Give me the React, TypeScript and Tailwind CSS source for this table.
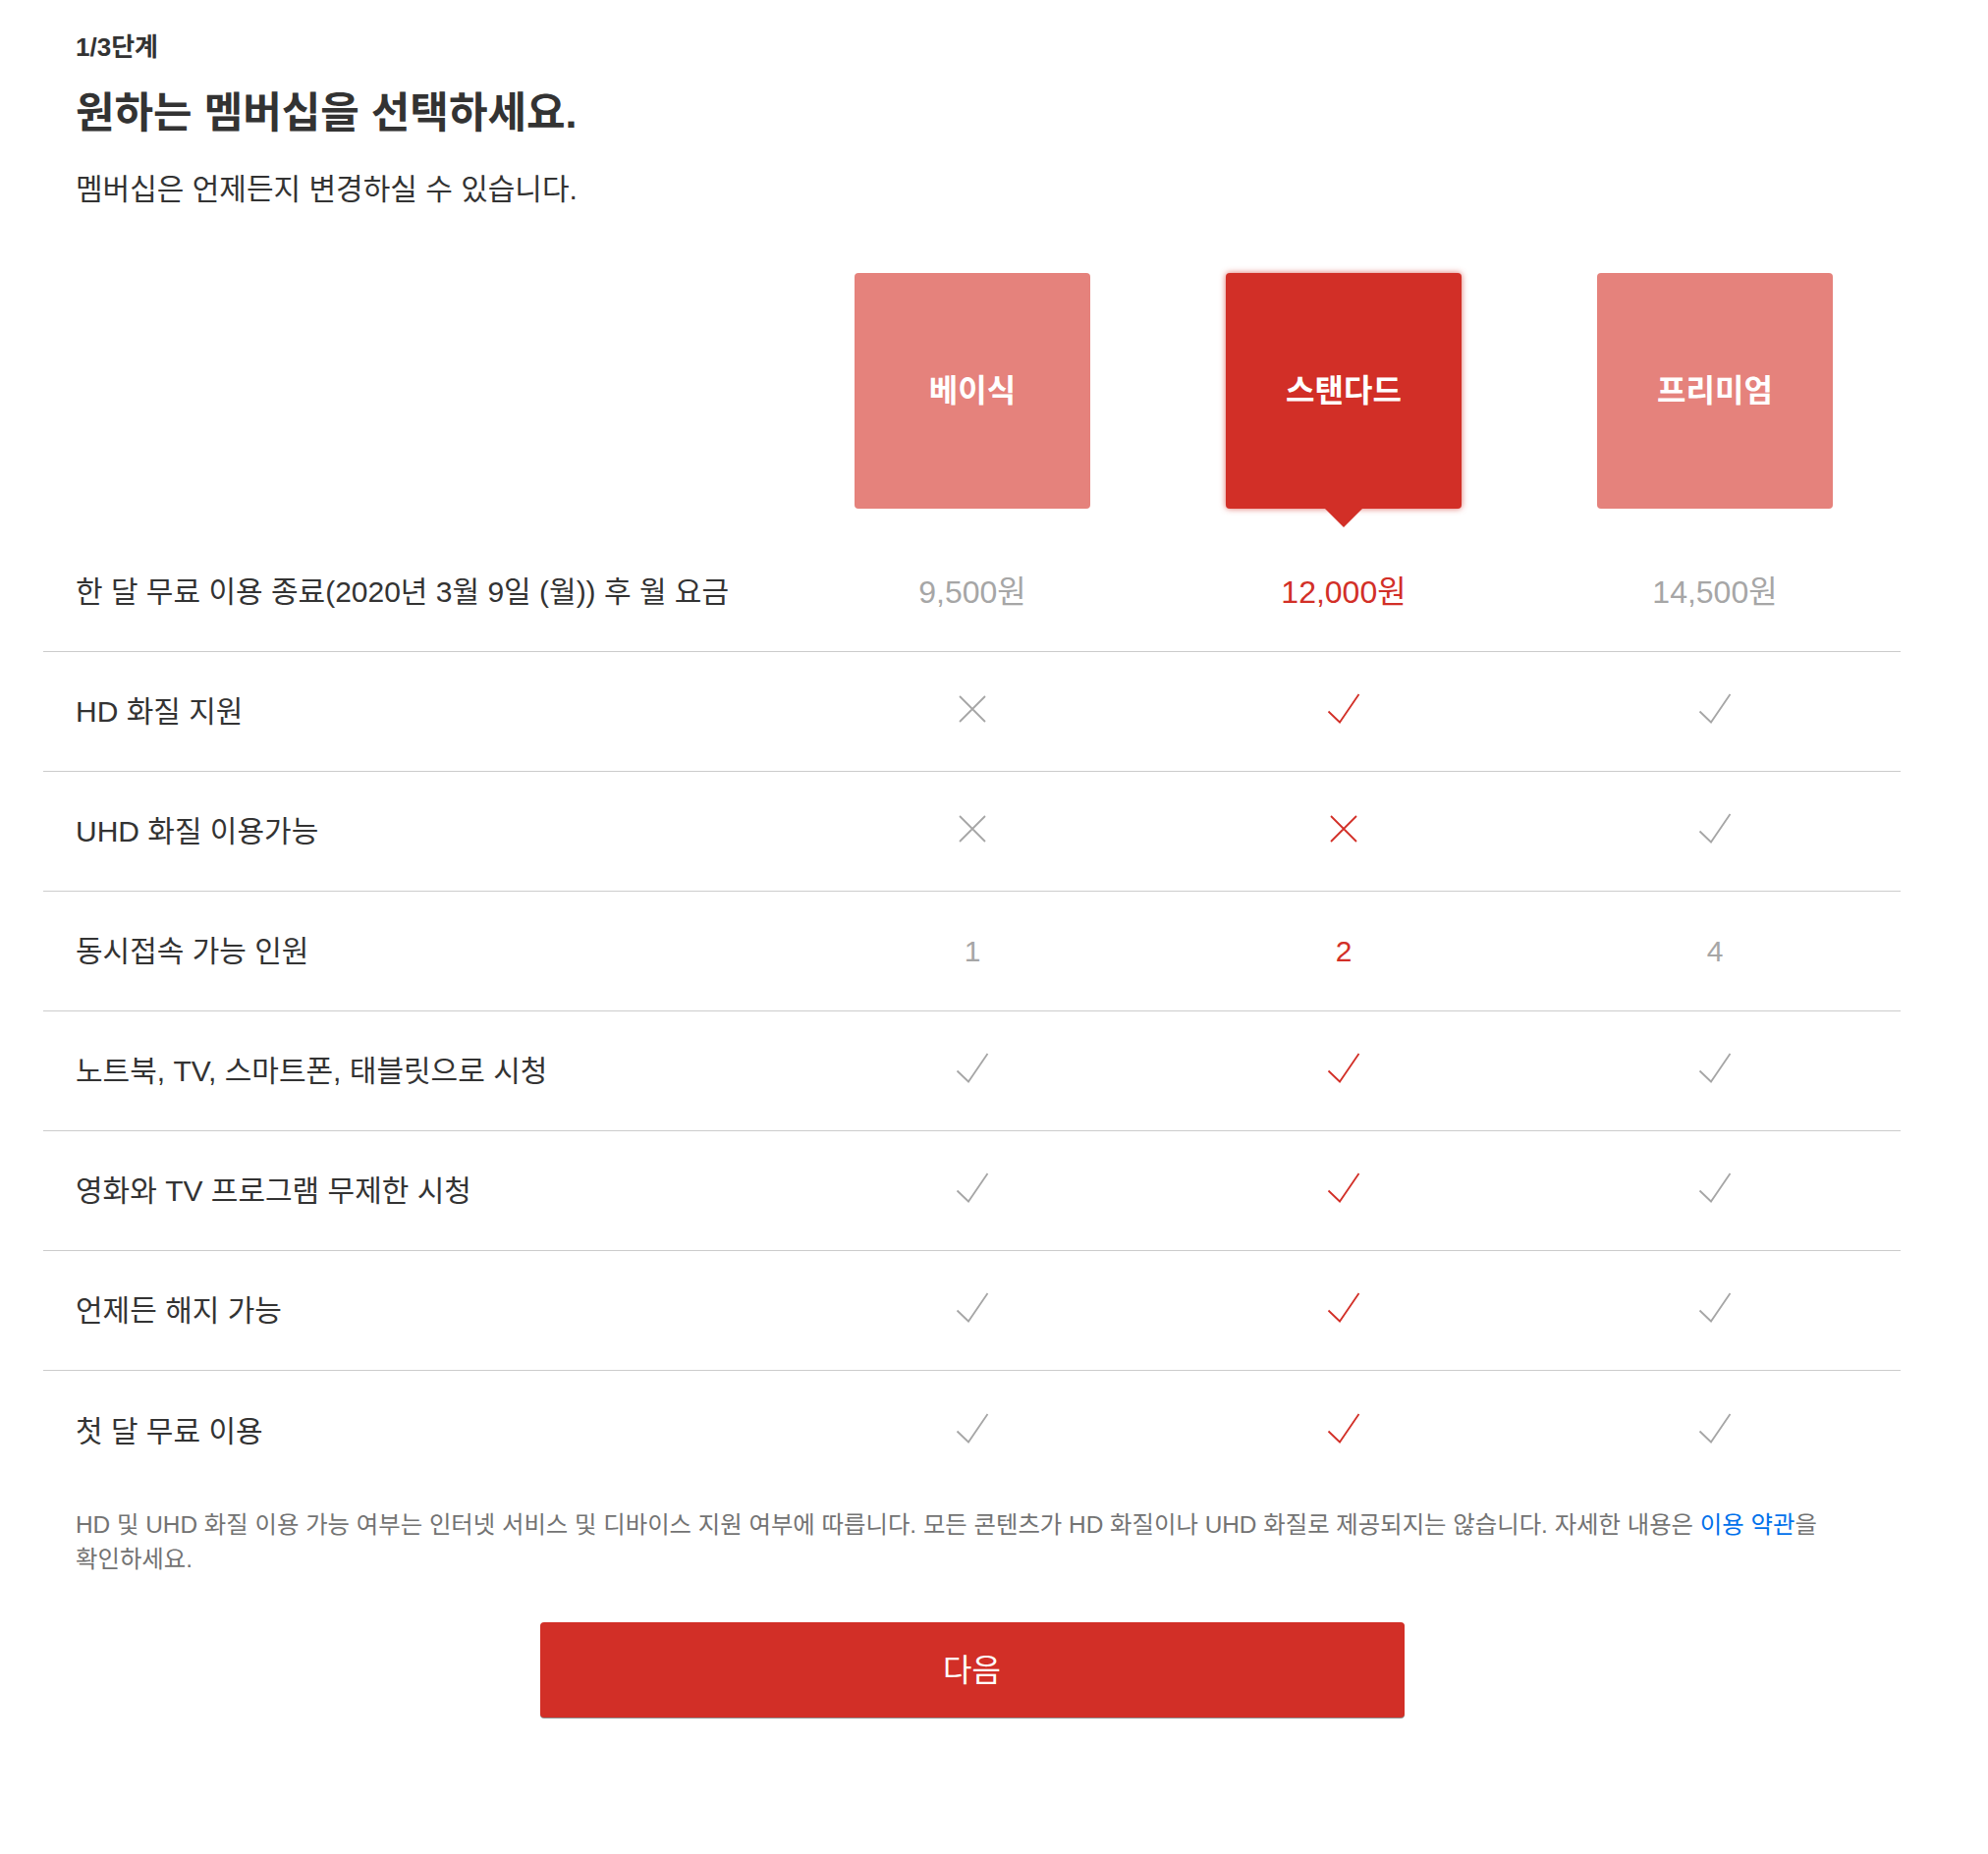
import React from 'react'

type Value = 'check' | 'x' | string

const features: { label: string; values: Value[] }[] = [
  { label: 'HD 화질 지원', values: ['x', 'check', 'check'] },
  { label: 'UHD 화질 이용가능', values: ['x', 'x', 'check'] },
  { label: '동시접속 가능 인원', values: ['1', '2', '4'] },
  { label: '노트북, TV, 스마트폰, 태블릿으로 시청', values: ['check', 'check', 'check'] },
  { label: '영화와 TV 프로그램 무제한 시청', values: ['check', 'check', 'check'] },
  { label: '언제든 해지 가능', values: ['check', 'check', 'check'] },
  { label: '첫 달 무료 이용', values: ['check', 'check', 'check'] },
]

const plans = [
  { name: '베이식', price: '9,500원' },
  { name: '스탠다드', price: '12,000원' },
  { name: '프리미엄', price: '14,500원' },
]

const selected = 1

function CheckIcon({ className }: { className: string }) {
  return (
    <svg width="34" height="31" viewBox="0 0 34 31" fill="none" className={className}>
      <polyline points="1.5,18.5 13,29.5 32.5,1" stroke="currentColor" strokeWidth="1.8" />
    </svg>
  )
}

function XIcon({ className }: { className: string }) {
  return (
    <svg width="28" height="28" viewBox="0 0 28 28" fill="none" className={className}>
      <path d="M1 1L27 27M27 1L1 27" stroke="currentColor" strokeWidth="1.8" />
    </svg>
  )
}

function Cell({ value, active }: { value: Value; active: boolean }) {
  const color = active ? 'text-[#d22f27]' : 'text-[#a6a6a6]'
  if (value === 'check') return <CheckIcon className={`${color} -mt-[6px]`} />
  if (value === 'x') return <XIcon className={`${color} -mt-[6px]`} />
  return <span className={`text-[30px] ${color}`}>{value}</span>
}

export default function App() {
  return (
    <div className="min-h-screen w-full bg-white font-['Liberation_Sans','Noto_Sans_CJK_KR',sans-serif] text-[#333333]">
      <div className="ml-[44px] w-[1891px] pb-[120px]">
        <div className="pl-[33px]">
          <div className="pt-[35px] text-[26px] font-bold leading-[26px]">1/3단계</div>
          <h1 className="mt-[29px] text-[43px] font-bold leading-[50px]">원하는 멤버십을 선택하세요.</h1>
          <p className="mt-[33px] text-[30px] leading-[40px]">멤버십은 언제든지 변경하실 수 있습니다.</p>
        </div>

        <div className="mt-[65px] grid grid-cols-[757px_378px_378px_378px]">
          <div />
          {plans.map((plan, i) => (
            <div key={plan.name} className="flex justify-center">
              <div
                className={
                  i === selected
                    ? 'relative flex h-[240px] w-[240px] items-center justify-center rounded-[4px] bg-[#d22f27] shadow-[0_0_6px_rgba(210,47,39,0.7)]'
                    : 'relative flex h-[240px] w-[240px] items-center justify-center rounded-[4px] bg-[#e5827c]'
                }
              >
                <span className="text-[32px] font-bold text-white">{plan.name}</span>
                {i === selected && (
                  <span className="absolute left-1/2 top-full h-0 w-0 -translate-x-1/2 border-x-[19px] border-t-[19px] border-x-transparent border-t-[#d22f27]" />
                )}
              </div>
            </div>
          ))}
        </div>

        <div className="mt-[24px] grid h-[122px] grid-cols-[757px_378px_378px_378px] items-center border-b border-[#cccccc]">
          <div className="pl-[33px] text-[30px]">한 달 무료 이용 종료(2020년 3월 9일 (월)) 후 월 요금</div>
          {plans.map((plan, i) => (
            <div key={plan.name} className="flex justify-center">
              <span className={i === selected ? 'text-[32px] text-[#d22f27]' : 'text-[32px] text-[#a6a6a6]'}>
                {plan.price}
              </span>
            </div>
          ))}
        </div>

        {features.map((row, r) => (
          <div
            key={row.label}
            className={
              r === features.length - 1
                ? 'grid h-[122px] grid-cols-[757px_378px_378px_378px] items-center'
                : 'grid h-[122px] grid-cols-[757px_378px_378px_378px] items-center border-b border-[#cccccc]'
            }
          >
            <div className="pl-[33px] text-[30px]">{row.label}</div>
            {row.values.map((v, i) => (
              <div key={i} className="flex justify-center">
                <Cell value={v} active={i === selected} />
              </div>
            ))}
          </div>
        ))}

        <p className="mt-[17px] break-keep px-[33px] text-[24.4px] leading-[35px] text-[#737373]">
          HD 및 UHD 화질 이용 가능 여부는 인터넷 서비스 및 디바이스 지원 여부에 따릅니다. 모든 콘텐츠가 HD 화질이나 UHD 화질로
          제공되지는 않습니다. 자세한 내용은 <a className="text-[#0071eb]">이용 약관</a>을 확인하세요.
        </p>

        <button className="mx-auto mt-[47px] block h-[97px] w-[880px] rounded-[4px] bg-[#d22f27] text-[32px] text-white shadow-[0_1px_0_rgba(0,0,0,0.45)]">
          다음
        </button>
      </div>
    </div>
  )
}
